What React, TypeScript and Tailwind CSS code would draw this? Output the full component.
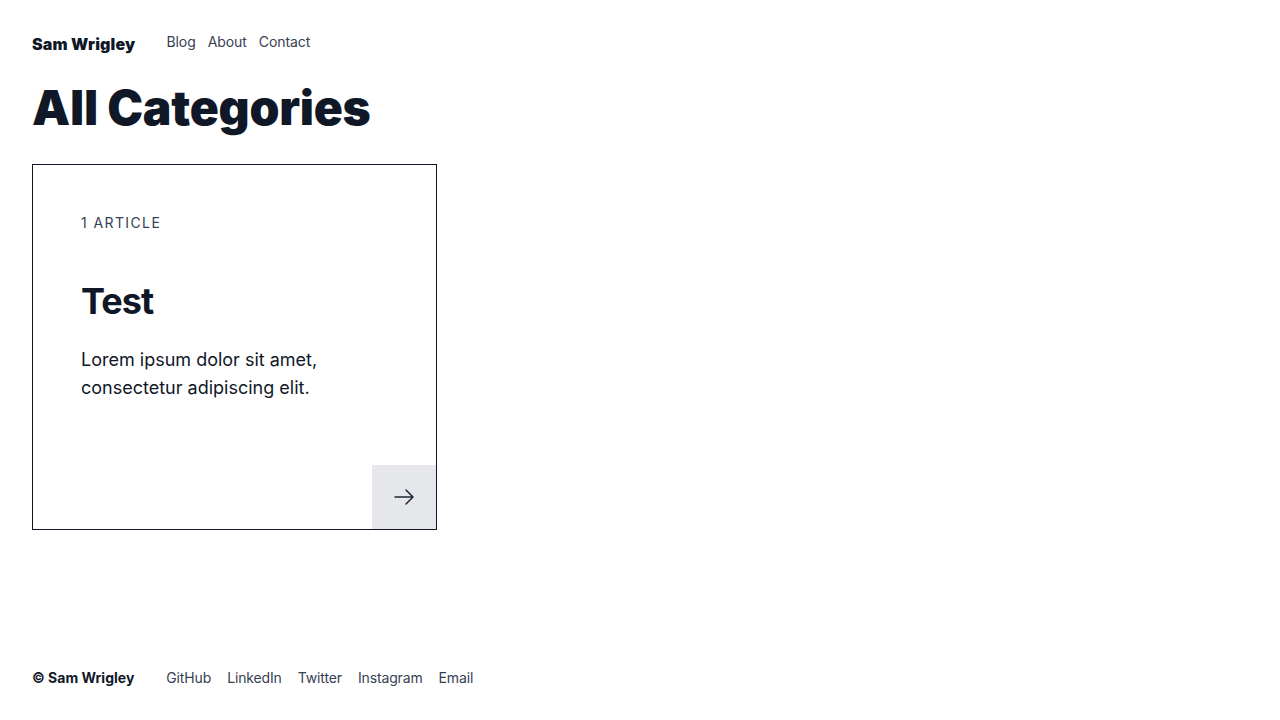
import React from "react";

export default function App() {
  return (
    <div className="min-h-screen flex flex-col bg-white px-8 pt-8 pb-8 text-gray-900 font-['Inter',sans-serif]">
      <header className="flex items-start gap-[31px]">
        <span className="text-base leading-6 font-black tracking-[0.01em]">Sam Wrigley</span>
        <nav className="flex gap-3 text-sm leading-5 text-gray-700 tracking-[-0.005em]">
          <a>Blog</a>
          <a>About</a>
          <a>Contact</a>
        </nav>
      </header>
      <main className="flex-1">
        <h1 className="mt-[28px] text-5xl leading-none font-black tracking-[-0.005em]">All Categories</h1>
        <div className="mt-8 grid grid-cols-3">
          <div className="border border-gray-900 flex flex-col">
            <div className="px-12 pt-12 pb-[63px]">
              <p className="text-sm leading-5 uppercase tracking-widest text-gray-700">1 Article</p>
              <h2 className="mt-12 text-4xl leading-10 font-bold tracking-tight">Test</h2>
              <p className="mt-[25px] text-lg leading-7 text-gray-900">Lorem ipsum dolor sit amet, consectetur adipiscing elit.</p>
            </div>
            <div className="flex justify-end">
              <div className="w-16 h-16 bg-gray-200 flex items-center justify-center text-gray-800">
                <svg width="24" height="24" viewBox="0 0 24 24" fill="none" stroke="currentColor" strokeWidth="1.5" strokeLinecap="round" strokeLinejoin="round">
                  <path d="M14 5l7 7m0 0l-7 7m7-7H3" />
                </svg>
              </div>
            </div>
          </div>
        </div>
      </main>
      <footer className="flex items-center gap-8 text-sm leading-5">
        <span className="font-bold">© Sam Wrigley</span>
        <nav className="flex gap-4 text-gray-700 tracking-[-0.01em]">
          <a>GitHub</a>
          <a>LinkedIn</a>
          <a>Twitter</a>
          <a>Instagram</a>
          <a>Email</a>
        </nav>
      </footer>
    </div>
  );
}
